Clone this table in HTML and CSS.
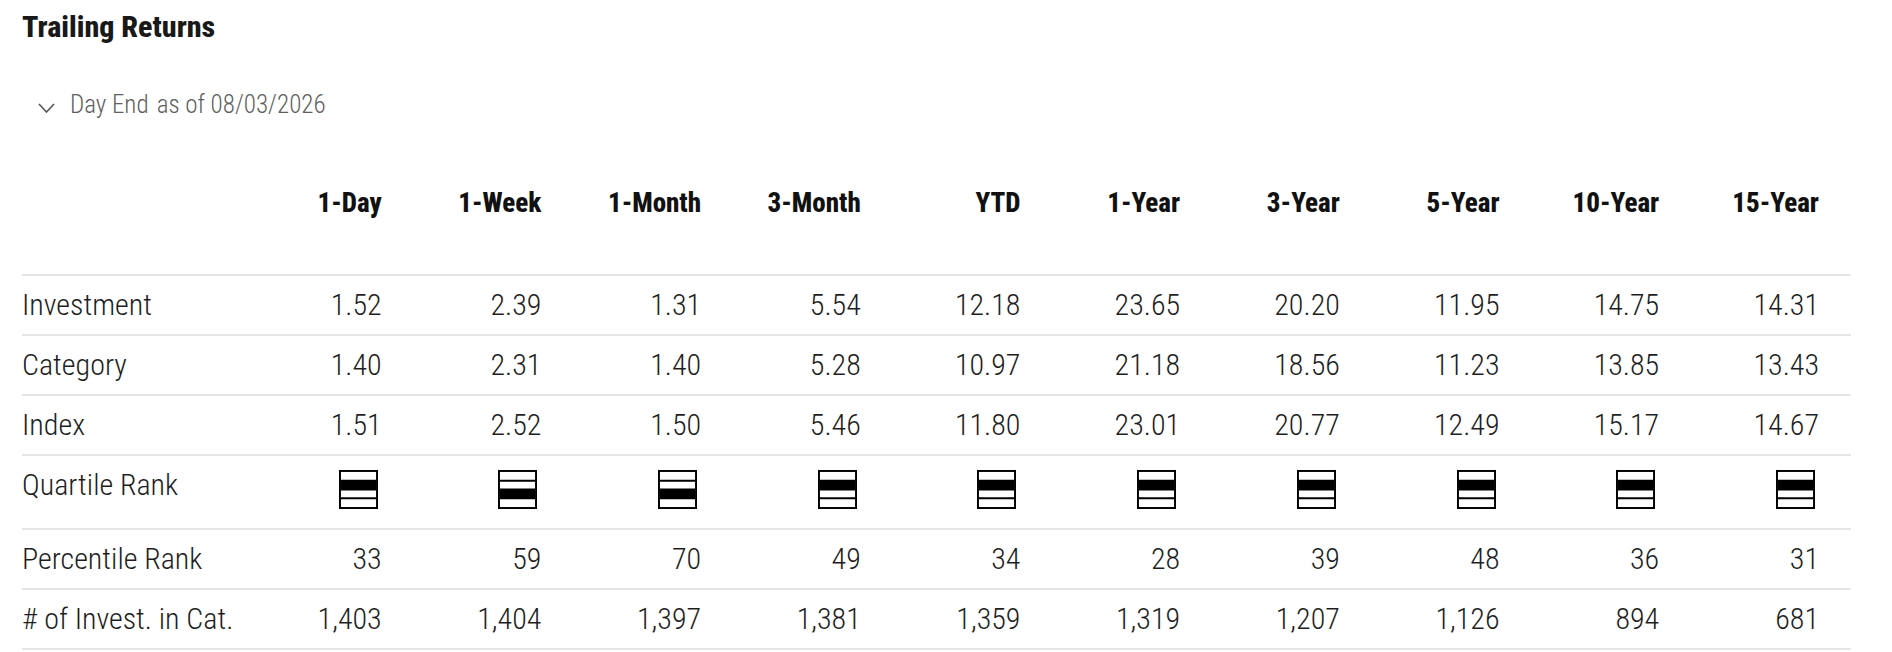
FILE: index.html
```html
<!DOCTYPE html>
<html lang="en">
<head>
<meta charset="utf-8">
<title>Trailing Returns</title>
<link rel="stylesheet" href="styles.css">
</head>
<body>
<section class="page">
  <h2 class="title">Trailing Returns</h2>
  <div class="asof">
    <svg class="chev" width="17" height="10" viewBox="0 0 17 10" aria-hidden="true"><polyline points="1,1 8.5,9 16,1" fill="none" stroke="#555" stroke-width="1.6"/></svg>
    <span class="asof-type">Day End</span>
    <span class="asof-date">as of 08/03/2026</span>
  </div>
  <table class="returns">
    <colgroup><col class="c-label"><col span="10" class="c-val"></colgroup>
    <thead>
      <tr>
        <th class="lab"></th>
        <th>1-Day</th><th>1-Week</th><th>1-Month</th><th>3-Month</th><th>YTD</th>
        <th>1-Year</th><th>3-Year</th><th>5-Year</th><th>10-Year</th><th>15-Year</th>
      </tr>
    </thead>
    <tbody>
      <tr>
        <td class="lab">Investment</td>
        <td>1.52</td><td>2.39</td><td>1.31</td><td>5.54</td><td>12.18</td><td>23.65</td><td>20.20</td><td>11.95</td><td>14.75</td><td>14.31</td>
      </tr>
      <tr>
        <td class="lab">Category</td>
        <td>1.40</td><td>2.31</td><td>1.40</td><td>5.28</td><td>10.97</td><td>21.18</td><td>18.56</td><td>11.23</td><td>13.85</td><td>13.43</td>
      </tr>
      <tr>
        <td class="lab">Index</td>
        <td>1.51</td><td>2.52</td><td>1.50</td><td>5.46</td><td>11.80</td><td>23.01</td><td>20.77</td><td>12.49</td><td>15.17</td><td>14.67</td>
      </tr>
      <tr class="quart">
        <td class="lab">Quartile Rank</td>
        <td><svg class="q" viewBox="0 0 40 40"><rect x="1" y="1" width="38" height="38" fill="#fff" stroke="#000" stroke-width="2"/><rect x="2" y="11" width="36" height="9" fill="#000"/><path d="M2 11H38M2 20H38M2 29H38" stroke="#000" stroke-width="2"/></svg></td>
        <td><svg class="q" viewBox="0 0 40 40"><rect x="1" y="1" width="38" height="38" fill="#fff" stroke="#000" stroke-width="2"/><rect x="2" y="20" width="36" height="9" fill="#000"/><path d="M2 11H38M2 20H38M2 29H38" stroke="#000" stroke-width="2"/></svg></td>
        <td><svg class="q" viewBox="0 0 40 40"><rect x="1" y="1" width="38" height="38" fill="#fff" stroke="#000" stroke-width="2"/><rect x="2" y="20" width="36" height="9" fill="#000"/><path d="M2 11H38M2 20H38M2 29H38" stroke="#000" stroke-width="2"/></svg></td>
        <td><svg class="q" viewBox="0 0 40 40"><rect x="1" y="1" width="38" height="38" fill="#fff" stroke="#000" stroke-width="2"/><rect x="2" y="11" width="36" height="9" fill="#000"/><path d="M2 11H38M2 20H38M2 29H38" stroke="#000" stroke-width="2"/></svg></td>
        <td><svg class="q" viewBox="0 0 40 40"><rect x="1" y="1" width="38" height="38" fill="#fff" stroke="#000" stroke-width="2"/><rect x="2" y="11" width="36" height="9" fill="#000"/><path d="M2 11H38M2 20H38M2 29H38" stroke="#000" stroke-width="2"/></svg></td>
        <td><svg class="q" viewBox="0 0 40 40"><rect x="1" y="1" width="38" height="38" fill="#fff" stroke="#000" stroke-width="2"/><rect x="2" y="11" width="36" height="9" fill="#000"/><path d="M2 11H38M2 20H38M2 29H38" stroke="#000" stroke-width="2"/></svg></td>
        <td><svg class="q" viewBox="0 0 40 40"><rect x="1" y="1" width="38" height="38" fill="#fff" stroke="#000" stroke-width="2"/><rect x="2" y="11" width="36" height="9" fill="#000"/><path d="M2 11H38M2 20H38M2 29H38" stroke="#000" stroke-width="2"/></svg></td>
        <td><svg class="q" viewBox="0 0 40 40"><rect x="1" y="1" width="38" height="38" fill="#fff" stroke="#000" stroke-width="2"/><rect x="2" y="11" width="36" height="9" fill="#000"/><path d="M2 11H38M2 20H38M2 29H38" stroke="#000" stroke-width="2"/></svg></td>
        <td><svg class="q" viewBox="0 0 40 40"><rect x="1" y="1" width="38" height="38" fill="#fff" stroke="#000" stroke-width="2"/><rect x="2" y="11" width="36" height="9" fill="#000"/><path d="M2 11H38M2 20H38M2 29H38" stroke="#000" stroke-width="2"/></svg></td>
        <td><svg class="q" viewBox="0 0 40 40"><rect x="1" y="1" width="38" height="38" fill="#fff" stroke="#000" stroke-width="2"/><rect x="2" y="11" width="36" height="9" fill="#000"/><path d="M2 11H38M2 20H38M2 29H38" stroke="#000" stroke-width="2"/></svg></td>
      </tr>
      <tr>
        <td class="lab">Percentile Rank</td>
        <td>33</td><td>59</td><td>70</td><td>49</td><td>34</td><td>28</td><td>39</td><td>48</td><td>36</td><td>31</td>
      </tr>
      <tr>
        <td class="lab"># of Invest. in Cat.</td>
        <td>1,403</td><td>1,404</td><td>1,397</td><td>1,381</td><td>1,359</td><td>1,319</td><td>1,207</td><td>1,126</td><td>894</td><td>681</td>
      </tr>
    </tbody>
  </table>
</section>
</body>
</html>
```

FILE: styles.css
```css
html, body {
  margin: 0;
  padding: 0;
  background: #fff;
}

.page {
  padding: 9px 0 0 22px;
  font-family: Roboto, "Open Sans", sans-serif;
  font-stretch: 75%;
  color: #1e1e1e;
}

.title {
  margin: 0;
  font-size: 30px;
  line-height: 36px;
  font-weight: 800;
  color: #191919;
}

.asof {
  display: flex;
  align-items: center;
  margin-top: 45px;
  padding-left: 16px;
  height: 30px;
  font-size: 25px;
  line-height: 30px;
  font-weight: 300;
  color: #5e5e5e;
}

.chev {
  display: block;
  margin-top: 6px;
  margin-right: 15px;
}

.asof-type {
  margin-right: 8px;
}

.returns {
  margin-top: 40px;
  width: 1829px;
  table-layout: fixed;
  border-collapse: separate;
  border-spacing: 0;
  font-size: 30px;
}

.c-label { width: 232px; }
.c-val { width: 159.7px; }

.returns th,
.returns td {
  box-sizing: border-box;
  padding: 0 32px 0 0;
  text-align: right;
  white-space: nowrap;
  border-bottom: 2px solid #e6e6e6;
}

.returns th {
  height: 116px;
  vertical-align: top;
  padding-top: 27px;
  font-size: 27px;
  line-height: 32px;
  font-weight: 800;
  color: #111;
}

.returns td {
  height: 60px;
  line-height: 34px;
  vertical-align: middle;
  font-weight: 300;
  color: #1e1e1e;
}

.returns .lab {
  text-align: left;
  padding: 0;
  color: #1e1e1e;
}

.quart td {
  height: 74px;
  padding-bottom: 6px;
}

.quart td:not(.lab) {
  padding-right: 36px;
}

.quart .lab {
  padding-bottom: 14px;
}

.q {
  display: inline-block;
  width: 39px;
  height: 39px;
  vertical-align: middle;
}
```
